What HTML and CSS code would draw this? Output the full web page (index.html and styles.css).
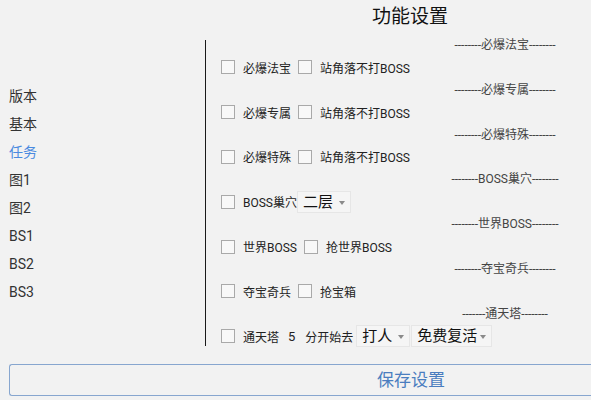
FILE: index.html
```html
<!DOCTYPE html>
<html>
<head>
<meta charset="utf-8">
<link rel="stylesheet" href="styles.css">
</head>
<body>
<div class="page">
  <div class="title">功能设置</div>
  <div class="main">
    <ul class="nav">
      <li>版本</li>
      <li>基本</li>
      <li class="active">任务</li>
      <li>图1</li>
      <li>图2</li>
      <li>BS1</li>
      <li>BS2</li>
      <li>BS3</li>
    </ul>
    <div class="sep"></div>
    <div class="panel">
      <div class="head">--------必爆法宝--------</div>
      <div class="row"><span class="cb"></span><span class="lbl">必爆法宝</span><span class="cb"></span><span class="lbl">站角落不打BOSS</span></div>
      <div class="head">--------必爆专属--------</div>
      <div class="row"><span class="cb"></span><span class="lbl">必爆专属</span><span class="cb"></span><span class="lbl">站角落不打BOSS</span></div>
      <div class="head">--------必爆特殊--------</div>
      <div class="row"><span class="cb"></span><span class="lbl">必爆特殊</span><span class="cb"></span><span class="lbl">站角落不打BOSS</span></div>
      <div class="head">--------BOSS巢穴--------</div>
      <div class="row"><span class="cb"></span><span class="lbl tight">BOSS巢穴</span><span class="sel w54">二层<i class="arr"></i></span></div>
      <div class="head">--------世界BOSS--------</div>
      <div class="row"><span class="cb"></span><span class="lbl">世界BOSS</span><span class="cb"></span><span class="lbl">抢世界BOSS</span></div>
      <div class="head">--------夺宝奇兵--------</div>
      <div class="row"><span class="cb"></span><span class="lbl">夺宝奇兵</span><span class="cb"></span><span class="lbl">抢宝箱</span></div>
      <div class="head">-------通天塔--------</div>
      <div class="row"><span class="cb"></span><span class="lbl">通天塔</span><span class="num">5</span><span class="lbl small">分开始去</span><span class="sel w53">打人<i class="arr"></i></span><span class="sel w80">免费复活<i class="arr"></i></span></div>
    </div>
  </div>
  <div class="btn">保存设置</div>
</div>
</body>
</html>
```
FILE: styles.css
```css
html, body {
  margin: 0;
  padding: 0;
  background: #f2f2f2;
  overflow: hidden;
  height: 400px;
}
.page {
  width: 591px;
  overflow: hidden;
  font-family: Roboto, "Noto Sans CJK SC", sans-serif;
  color: #222;
}
.title {
  height: 34px;
  line-height: 34px;
  font-size: 19px;
  color: #111;
  padding-left: 372px;
}
.main {
  display: flex;
  height: 330px;
}
.nav {
  list-style: none;
  margin: 0;
  padding: 48px 0 0 9px;
  width: 196px;
  font-size: 14px;
  color: #333;
}
.nav li {
  height: 28px;
  line-height: 28px;
}
.nav li.active {
  color: #4a8ae0;
}
.sep {
  width: 1px;
  height: 306px;
  margin-top: 6px;
  background: #1a1a1a;
}
.panel {
  display: flex;
  flex-direction: column;
  padding-left: 15px;
}
.head {
  height: 22px;
  line-height: 22px;
  width: 160px;
  margin-left: 204px;
  text-align: center;
  font-size: 12px;
  color: #444;
  white-space: nowrap;
}
.row {
  height: 22.8px;
  display: flex;
  align-items: center;
  font-size: 12px;
  white-space: nowrap;
}
.cb {
  width: 12px;
  height: 12px;
  border: 1px solid #a9a9a9;
  background: #f8f8f8;
  flex: none;
}
.lbl {
  margin-left: 8px;
  margin-right: 7px;
}
.lbl.tight {
  margin-right: 0;
}
.lbl.small {
  margin-left: 10px;
  margin-right: 3px;
}
.num {
  font-size: 13px;
  margin-left: 2px;
}
.sel {
  position: relative;
  height: 22px;
  line-height: 21px;
  font-size: 15px;
  padding-left: 5px;
  background: #f5f5f5;
  border: 1px solid #e6e6e6;
  box-sizing: border-box;
  color: #111;
  flex: none;
}
.w54 { width: 54px; }
.w53 { width: 54px; }
.w80 { width: 81px; margin-left: 1px; }
.arr {
  position: absolute;
  right: 5px;
  top: 9px;
  width: 0;
  height: 0;
  border-left: 3.5px solid transparent;
  border-right: 3.5px solid transparent;
  border-top: 4px solid #8a8a8a;
}
.btn {
  margin: 0 0 0 9px;
  height: 32px;
  box-sizing: border-box;
  border: 1px solid #87a6cf;
  border-right: none;
  border-radius: 3px 0 0 3px;
  padding-left: 367px;
  line-height: 30px;
  font-size: 17px;
  color: #4a7dbf;
}
```
